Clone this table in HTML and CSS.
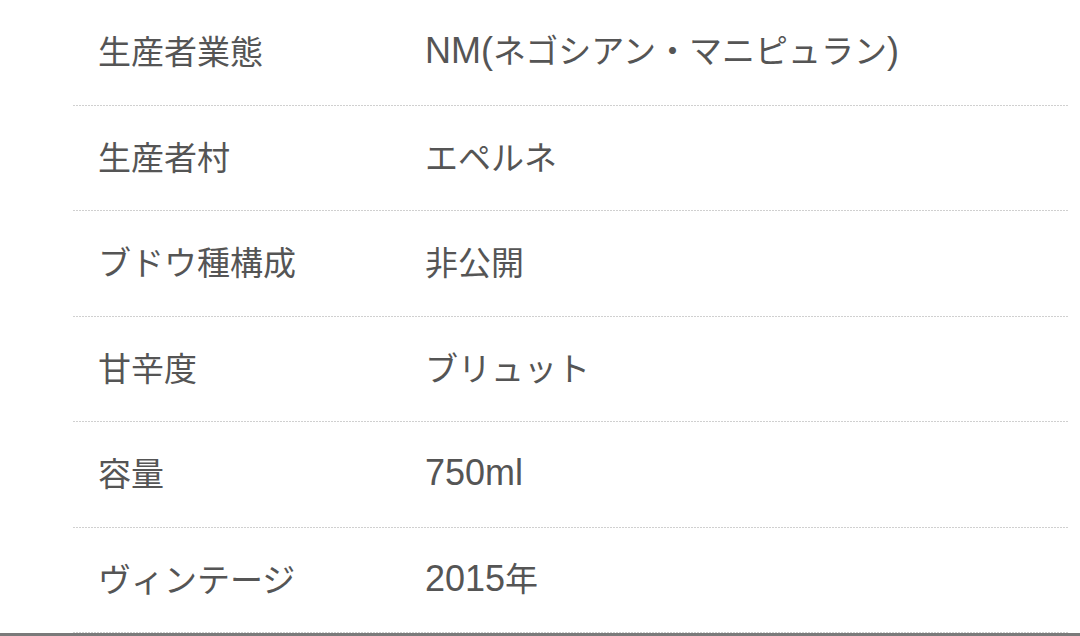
FILE: index.html
```html
<!DOCTYPE html>
<html lang="ja">
<head>
<meta charset="utf-8">
<link rel="stylesheet" href="styles.css">
</head>
<body>
<div class="page">
  <dl class="spec">
    <div class="row"><dt class="label">生産者業態</dt><dd class="value"><span class="latin">NM(</span>ネゴシアン・マニピュラン<span class="latin">)</span></dd></div>
    <div class="row"><dt class="label">生産者村</dt><dd class="value">エペルネ</dd></div>
    <div class="row"><dt class="label">ブドウ種構成</dt><dd class="value">非公開</dd></div>
    <div class="row"><dt class="label">甘辛度</dt><dd class="value">ブリュット</dd></div>
    <div class="row"><dt class="label">容量</dt><dd class="value"><span class="latin">750ml</span></dd></div>
    <div class="row"><dt class="label">ヴィンテージ</dt><dd class="value"><span class="latin">2015</span>年</dd></div>
  </dl>
  <div class="rule"></div>
</div>
</body>
</html>
```
FILE: styles.css
```css
html, body {
  margin: 0;
  padding: 0;
  background: #ffffff;
}
.page {
  width: 1080px;
  height: 636px;
  overflow: hidden;
  font-family: "Noto Sans CJK JP", sans-serif;
  color: #555555;
}
.spec {
  margin: 0 12px 0 73px;
  padding: 0;
}
.row {
  position: relative;
  display: flex;
  align-items: center;
  height: 105.5px;
  padding-bottom: 5px;
  box-sizing: border-box;
}
.row::after {
  content: "";
  position: absolute;
  left: 0;
  right: 0;
  bottom: 0;
  height: 1px;
  background-image: repeating-linear-gradient(to right, #d0d0d0 0 2px, transparent 2px 3px);
}
.label {
  margin: 0;
  padding-left: 25px;
  width: 327px;
  font-size: 33px;
  line-height: 40px;
}
.value {
  margin: 0;
  font-size: 33px;
  line-height: 40px;
}
.latin {
  font-family: "Liberation Sans", sans-serif;
  font-size: 36px;
  line-height: 40px;
}
.rule {
  height: 3px;
  background: #7a7a7a;
}
```
